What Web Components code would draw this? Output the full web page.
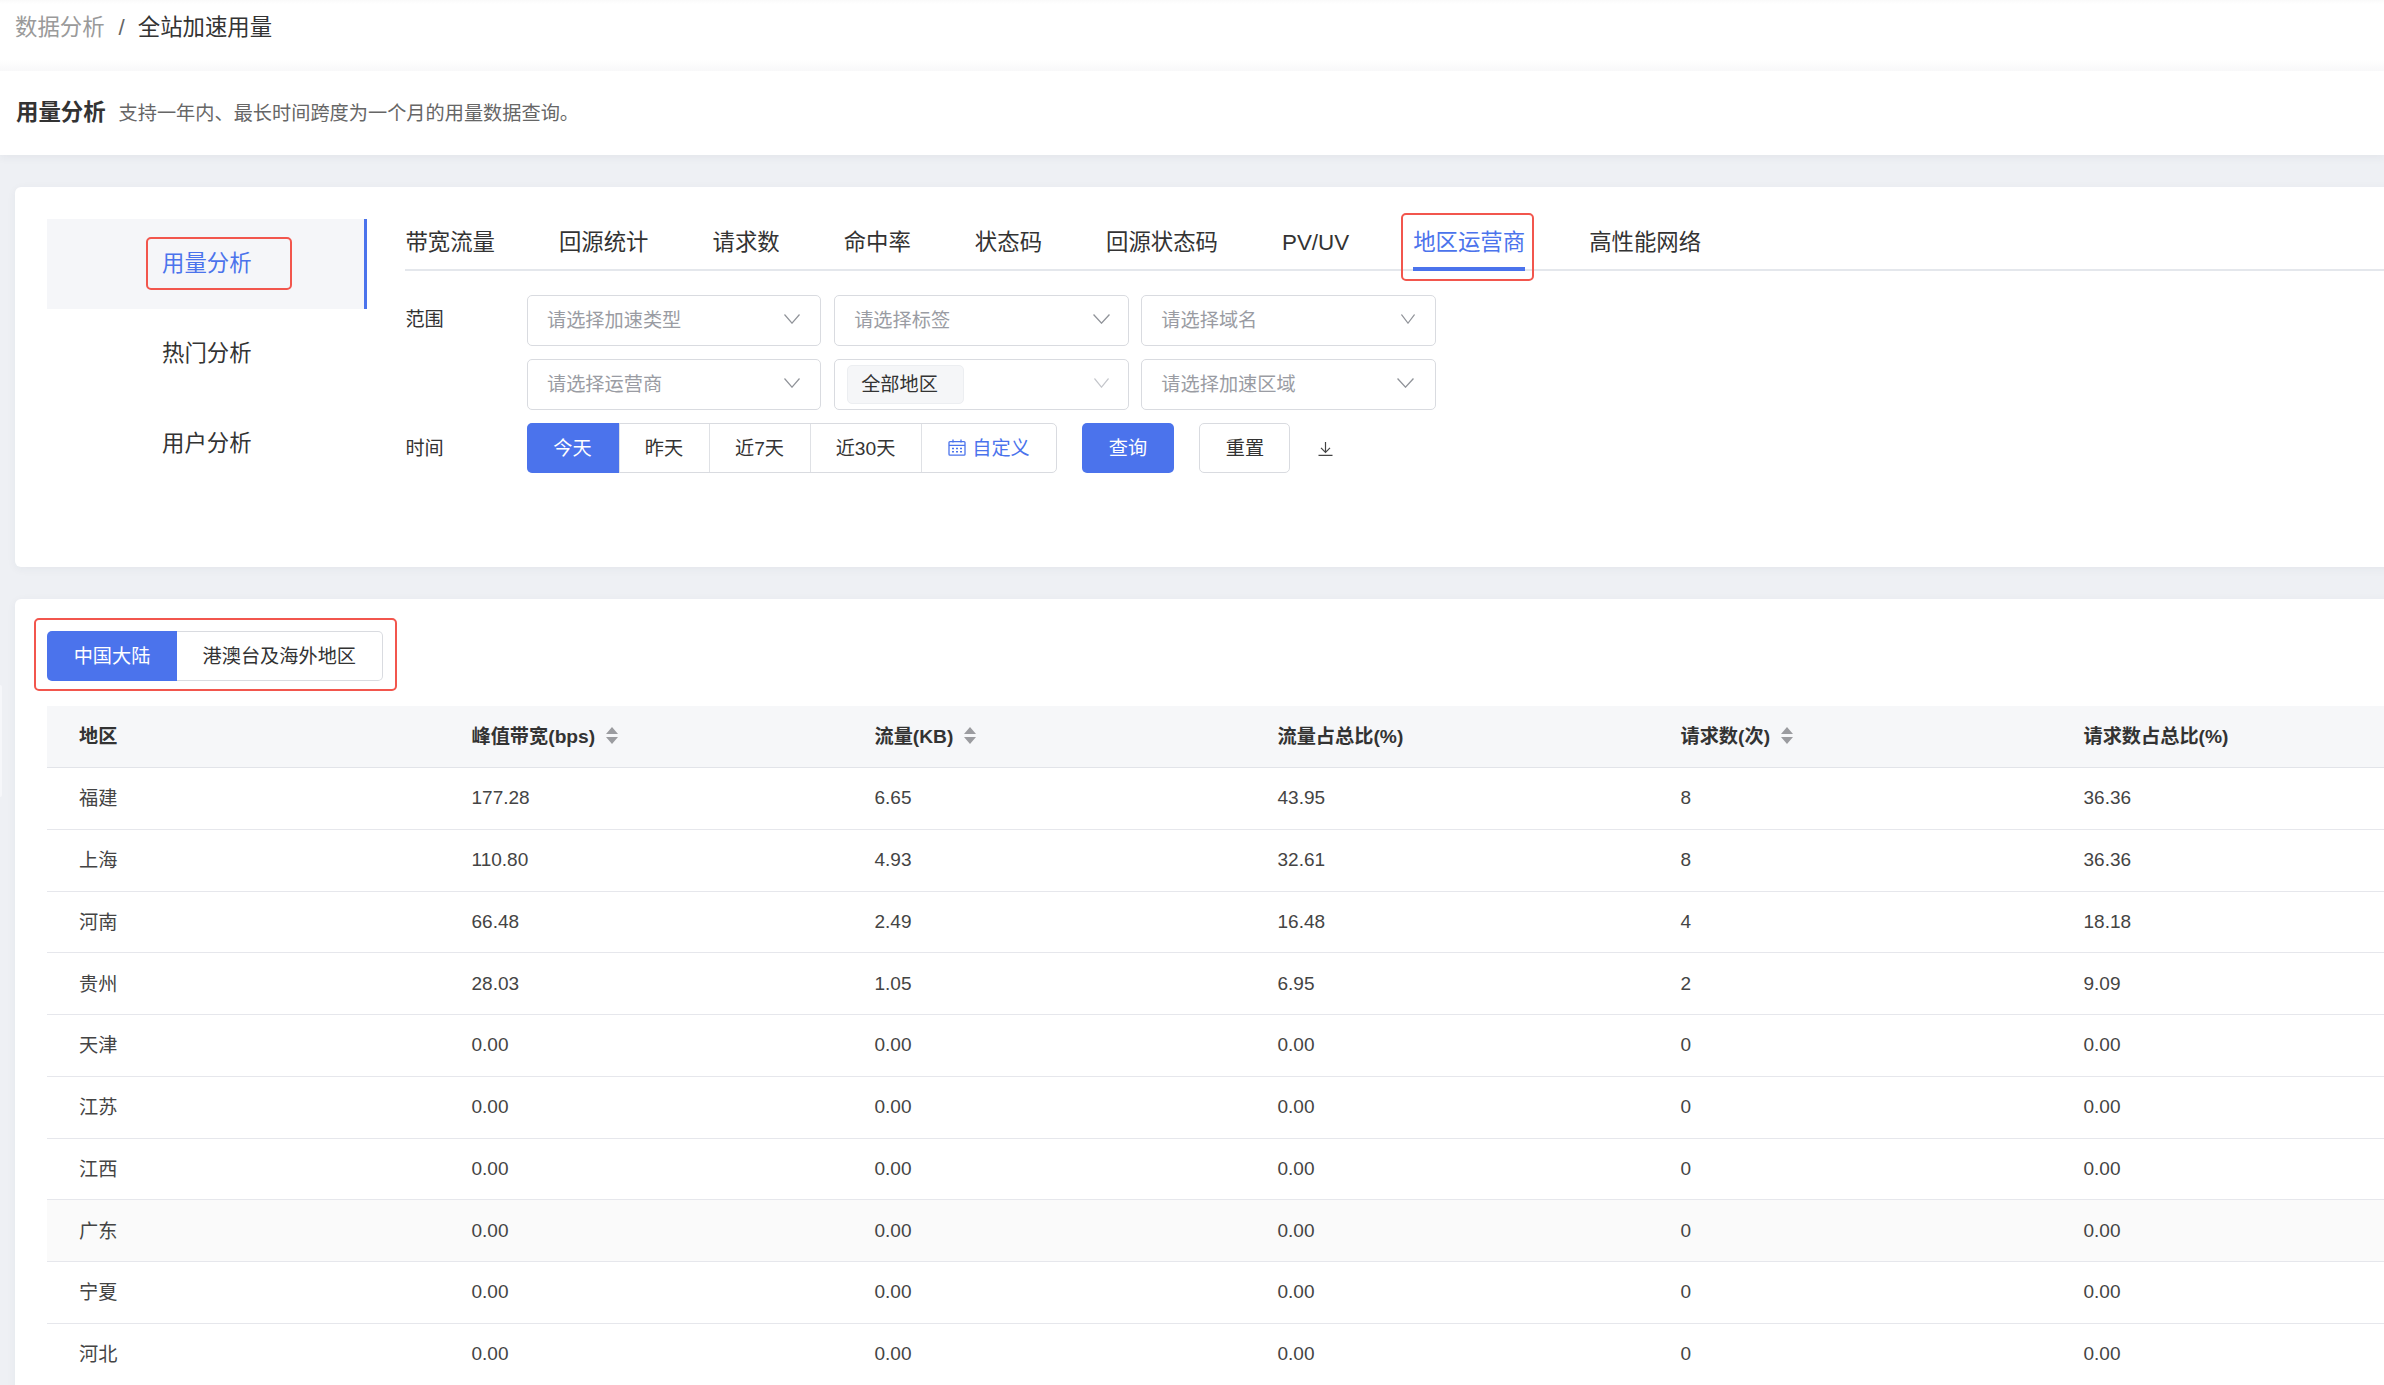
<!DOCTYPE html>
<html lang="zh-CN">
<head>
<meta charset="utf-8">
<title>全站加速用量</title>
<style>
    html, body { margin: 0; padding: 0; height: 100%; overflow: hidden; background: #eef0f4; }
    body { font-family: "Liberation Sans", "Noto Sans CJK SC", sans-serif; color: #333; width: 2384px; height: 1385px; position: relative; }
</style>
</head>
<body>
<page-head></page-head>
<usage-card></usage-card>
<region-card></region-card>
<side-handle></side-handle>

<script>
const BLUE = '#4b73ec';
const RED = '#f2564d';

class PageHead extends HTMLElement {
    constructor() {
        super();
        this.attachShadow({ mode: 'open' });
    }

    connectedCallback() {
        this.shadowRoot.innerHTML = `
            <style>
                :host { display: block; box-shadow: 0 3px 8px rgba(40, 50, 80, .05); position: relative; }
                .crumb {
                    height: 71px; box-sizing: border-box; padding: 13px 15px 0; font-size: 22.4px; line-height: 30px;
                    display: flex; background: linear-gradient(#fafafa 0, #fff 4px, #fff 60px, #f8f8f9 71px);
                }
                .crumb .prev { color: #9a9a9a; }
                .crumb .sep { color: #666; margin: 0 13px 0 14px; }
                .crumb .cur { color: #333; }
                .desc {
                    height: 84px; box-sizing: border-box; padding-top: 27px; padding-left: 16px; background: #fff;
                    display: flex; align-items: baseline; line-height: 30px;
                }
                .desc b { font-size: 22.4px; color: #333; font-weight: 700; margin-right: 13px; }
                .desc span { font-size: 19.2px; color: #666; }
            </style>
            <div class="crumb"><span class="prev">数据分析</span><span class="sep">/</span><span class="cur">全站加速用量</span></div>
            <div class="desc"><b>用量分析</b><span>支持一年内、最长时间跨度为一个月的用量数据查询。</span></div>
        `;
    }
}

class SideMenu extends HTMLElement {
    constructor() {
        super();
        this.attachShadow({ mode: 'open' });
    }

    connectedCallback() {
        const items = ['用量分析', '热门分析', '用户分析'];
        this.shadowRoot.innerHTML = `
            <style>
                :host { display: block; width: 320px; flex: none; font-size: 22.4px; color: #333; }
                .item { height: 90px; display: flex; align-items: center; padding-left: 115px; box-sizing: border-box; }
                .item.on { background: #f5f6f9; border-right: 3px solid ${BLUE}; color: ${BLUE}; }
                .item span { position: relative; line-height: 30px; }
                .item.on span::after {
                    content: ""; position: absolute; left: -16px; right: -40px; top: -12.5px; bottom: -10.5px;
                    border: 2.5px solid ${RED}; border-radius: 5px;
                }
            </style>
            ${items.map((t, i) => `<div class="item ${i === 0 ? 'on' : ''}"><span>${t}</span></div>`).join('')}
        `;
    }
}

class TabBar extends HTMLElement {
    constructor() {
        super();
        this.attachShadow({ mode: 'open' });
    }

    connectedCallback() {
        const tabs = ['带宽流量', '回源统计', '请求数', '命中率', '状态码', '回源状态码', 'PV/UV', '地区运营商', '高性能网络'];
        this.shadowRoot.innerHTML = `
            <style>
                :host { display: flex; gap: 64px; height: 52px; box-sizing: border-box; border-bottom: 2px solid #e4e7ec; font-size: 22.4px; color: #333; }
                .tab { position: relative; height: 52px; box-sizing: border-box; padding-top: 9px; line-height: 30px; white-space: nowrap; }
                .tab.on { color: ${BLUE}; }
                .tab.on::before { content: ""; position: absolute; left: 0; right: 0; bottom: 0; height: 4px; background: ${BLUE}; }
                .tab.on::after {
                    content: ""; position: absolute; left: -12px; right: -9px; top: -6px; bottom: -10px;
                    border: 2.5px solid ${RED}; border-radius: 5px;
                }
            </style>
            ${tabs.map(t => `<div class="tab ${t === '地区运营商' ? 'on' : ''}">${t}</div>`).join('')}
        `;
    }
}

class SelectBox extends HTMLElement {
    constructor() {
        super();
        this.attachShadow({ mode: 'open' });
    }

    connectedCallback() {
        const tag = this.getAttribute('tag');
        const holder = this.getAttribute('placeholder');
        const width = this.getAttribute('chev-w') || 16;
        const right = this.getAttribute('chev-r') || 21;
        this.shadowRoot.innerHTML = `
            <style>
                :host {
                    display: flex; align-items: center; justify-content: space-between; box-sizing: border-box;
                    width: 294.4px; height: 51px; background: #fff; border: 1px solid #d9dbe0; border-radius: 5px;
                    font-size: 19.2px; padding-left: ${tag ? 12 : 19}px; padding-right: ${right - 1}px;
                }
                .holder { color: #9a9ca3; margin-top: -3px; }
                .tag {
                    height: 39px; width: 117px; box-sizing: border-box; padding-left: 13px; line-height: 37px; color: #333;
                    background: #f5f6f8; border: 1px solid #eceef1; border-radius: 5px;
                }
                svg { display: block; flex: none; margin-top: -3px; }
            </style>
            ${tag ? `<span class="tag">${tag}</span>` : `<span class="holder">${holder}</span>`}
            <svg width="${width}" height="10" viewBox="0 0 16 10" preserveAspectRatio="none" fill="none">
                <polyline points="0.5,0.5 8,9.2 15.5,0.5" stroke="${tag ? '#c4c6cb' : '#909399'}" stroke-width="1.2"/>
            </svg>
        `;
    }
}

class BtnGroup extends HTMLElement {
    constructor() {
        super();
        this.attachShadow({ mode: 'open' });
    }

    connectedCallback() {
        const widths = (this.getAttribute('widths') || '').split(',');
        const labels = (this.getAttribute('labels') || '').split(',');
        const iconLast = this.hasAttribute('calendar');
        const cal = `<svg width="18" height="17" viewBox="0 0 18 17" fill="none" stroke="${BLUE}" stroke-width="1.3">
                <rect x="1" y="2.6" width="16" height="13.6" rx="1"/><path d="M1 6.4h16M5 .4v3M13 .4v3"/>
                <path d="M4 9.4h2M8 9.4h2M12 9.4h2M4 12.8h2M8 12.8h2M12 12.8h2" stroke-width="1.5"/></svg>`;
        this.shadowRoot.innerHTML = `
            <style>
                :host { display: inline-flex; height: 50px; font-size: 19.2px; color: #333; background: #fff; box-sizing: border-box; border: 1px solid #d9dbe0; border-radius: 5px; }
                .b { display: flex; align-items: center; justify-content: center; gap: 6px; box-sizing: border-box; border-left: 1px solid #dfe1e5; white-space: nowrap; padding: 0 1px 2px 0; }
                .b:first-of-type {
                    background: ${BLUE}; color: #fff; border: 0; margin: -1px 0 -1px -1px; border-radius: 5px 0 0 5px;
                }
                .b.cal { color: ${BLUE}; padding-right: 0; }
            </style>
            ${labels.map((t, i) => {
                const last = iconLast && i === labels.length - 1;
                return `<div class="b ${last ? 'cal' : ''}" style="width:${widths[i]}px">${last ? cal : ''}${t}</div>`;
            }).join('')}
        `;
    }
}

class FilterForm extends HTMLElement {
    constructor() {
        super();
        this.attachShadow({ mode: 'open' });
    }

    connectedCallback() {
        this.shadowRoot.innerHTML = `
            <style>
                :host { display: grid; grid-template-columns: 121.6px 1fr; row-gap: 13px; margin-top: 24px; font-size: 19.2px; color: #333; }
                .label { line-height: 50px; }
                .label.t { height: 50px; line-height: 52px; }
                .selects { display: grid; grid-template-columns: repeat(3, 294.4px); gap: 13px 12.8px; }
                .time { display: flex; align-items: flex-start; }
                .primary, .plain {
                    width: 92px; height: 50px; margin-left: 25px; box-sizing: border-box; border-radius: 5px;
                    display: flex; align-items: center; justify-content: center; padding-bottom: 2px;
                }
                .primary { background: ${BLUE}; color: #fff; }
                .plain { width: 91px; margin-left: 25.5px; border: 1px solid #d9dbe0; color: #333; }
                .dl { display: block; margin-left: 28px; margin-top: 19px; }
            </style>
            <div class="label">范围</div>
            <div class="selects">
                <select-box placeholder="请选择加速类型"></select-box>
                <select-box placeholder="请选择标签" chev-w="17" chev-r="19"></select-box>
                <select-box placeholder="请选择域名" chev-w="14" chev-r="21"></select-box>
                <select-box placeholder="请选择运营商"></select-box>
                <select-box tag="全部地区" chev-w="15" chev-r="20"></select-box>
                <select-box placeholder="请选择加速区域" chev-w="17" chev-r="22"></select-box>
            </div>
            <div class="label t">时间</div>
            <div class="time">
                <btn-group labels="今天,昨天,近7天,近30天,自定义" widths="92,90,101,111,135" calendar></btn-group>
                <div class="primary">查询</div>
                <div class="plain">重置</div>
                <svg class="dl" width="15" height="14" viewBox="0 0 15 14" fill="none" stroke="#444" stroke-width="1.2">
                    <path d="M7.5 0v10M3 5.8l4.5 4.5 4.5-4.5M0.5 13.3h14"/>
                </svg>
            </div>
        `;
    }
}

class UsageCard extends HTMLElement {
    constructor() {
        super();
        this.attachShadow({ mode: 'open' });
    }

    connectedCallback() {
        this.shadowRoot.innerHTML = `
            <style>
                :host {
                    display: flex; gap: 38.4px; box-sizing: border-box; height: 380px; width: 2400px;
                    margin: 32px 0 0 15px; padding: 32px 0 0 32px; background: #fff; border-radius: 6px;
                    box-shadow: 0 2px 10px rgba(40, 50, 80, .05); position: relative;
                }
                .main { flex: 1; min-width: 0; }
            </style>
            <side-menu></side-menu>
            <div class="main">
                <tab-bar></tab-bar>
                <filter-form></filter-form>
            </div>
        `;
    }
}

class RegionTable extends HTMLElement {
    constructor() {
        super();
        this.attachShadow({ mode: 'open' });
    }

    connectedCallback() {
        const caret = `<svg class="caret" width="12" height="17" viewBox="0 0 12 17" fill="#9b9ca0"><path d="M6 0l6 7H0zM6 17L0 10h12z"/></svg>`;
        const heads = [
            ['地区', false], ['峰值带宽(bps)', true], ['流量(KB)', true],
            ['流量占总比(%)', false], ['请求数(次)', true], ['请求数占总比(%)', false]
        ];
        const rows = [
            ['福建', '177.28', '6.65', '43.95', '8', '36.36'],
            ['上海', '110.80', '4.93', '32.61', '8', '36.36'],
            ['河南', '66.48', '2.49', '16.48', '4', '18.18'],
            ['贵州', '28.03', '1.05', '6.95', '2', '9.09'],
            ['天津', '0.00', '0.00', '0.00', '0', '0.00'],
            ['江苏', '0.00', '0.00', '0.00', '0', '0.00'],
            ['江西', '0.00', '0.00', '0.00', '0', '0.00'],
            ['广东', '0.00', '0.00', '0.00', '0', '0.00'],
            ['宁夏', '0.00', '0.00', '0.00', '0', '0.00'],
            ['河北', '0.00', '0.00', '0.00', '0', '0.00']
        ];
        this.shadowRoot.innerHTML = `
            <style>
                :host { display: block; margin-top: 25px; font-size: 19px; color: #444; }
                .row {
                    display: grid; grid-template-columns: 392.5px repeat(5, 403px); height: 61.75px; align-items: center;
                    box-sizing: border-box; border-bottom: 1px solid #e6e7ec;
                }
                .row.head { height: 62px; background: #f6f7f9; font-size: 19.2px; font-weight: 700; color: #333; border-bottom-color: #e2e4e9; }
                .row.head .cell { padding-bottom: 3px; }
                .row.head .caret { margin-top: 1px; }
                .row.hover { background: #fafafa; }
                .cell { padding-left: 32px; display: flex; align-items: center; }
                .cell.name { padding-bottom: 2px; font-size: 19.2px; }
                .caret { margin-left: 11px; }
            </style>
            <div class="row head">
                ${heads.map(h => `<div class="cell">${h[0]}${h[1] ? caret : ''}</div>`).join('')}
            </div>
            ${rows.map(r => `<div class="row ${r[0] === '广东' ? 'hover' : ''}">${r.map((c, i) => `<div class="cell ${i === 0 ? 'name' : ''}">${c}</div>`).join('')}</div>`).join('')}
        `;
    }
}

class SegToggle extends HTMLElement {
    constructor() {
        super();
        this.attachShadow({ mode: 'open' });
    }

    connectedCallback() {
        this.shadowRoot.innerHTML = `
            <style>
                :host { display: inline-flex; position: relative; height: 50px; box-sizing: border-box; vertical-align: top; font-size: 19.2px; color: #333; }
                :host::after {
                    content: ""; position: absolute; left: -13.5px; right: -14.5px; top: -13.5px; bottom: -9.5px;
                    border: 2.5px solid ${RED}; border-radius: 5px;
                }
                .a, .b { display: flex; align-items: center; justify-content: center; box-sizing: border-box; height: 50px; padding-bottom: 2px; }
                .a { width: 130px; background: ${BLUE}; color: #fff; border-radius: 5px 0 0 5px; }
                .b { width: 205.6px; background: #fff; border: 1px solid #d9dbe0; border-left: 0; border-radius: 0 5px 5px 0; }
            </style>
            <div class="a">中国大陆</div>
            <div class="b">港澳台及海外地区</div>
        `;
    }
}

class RegionCard extends HTMLElement {
    constructor() {
        super();
        this.attachShadow({ mode: 'open' });
    }

    connectedCallback() {
        this.shadowRoot.innerHTML = `
            <style>
                :host {
                    display: block; box-sizing: border-box; width: 2400px; height: 800px;
                    margin: 32px 0 0 15px; padding: 32px 0 0 32px; background: #fff; border-radius: 6px;
                    box-shadow: 0 2px 10px rgba(40, 50, 80, .05); position: relative;
                }
            </style>
            <seg-toggle></seg-toggle>
            <region-table></region-table>
        `;
    }
}

class SideHandle extends HTMLElement {
    constructor() {
        super();
        this.attachShadow({ mode: 'open' });
    }

    connectedCallback() {
        this.shadowRoot.innerHTML = `
            <style>
                :host { display: block; position: absolute; left: 0; top: 685px; width: 2px; height: 112px; background: #f6f7fa; border-radius: 0 3px 3px 0; }
            </style>
        `;
    }
}

customElements.define('page-head', PageHead);
customElements.define('side-menu', SideMenu);
customElements.define('tab-bar', TabBar);
customElements.define('select-box', SelectBox);
customElements.define('btn-group', BtnGroup);
customElements.define('filter-form', FilterForm);
customElements.define('usage-card', UsageCard);
customElements.define('region-table', RegionTable);
customElements.define('seg-toggle', SegToggle);
customElements.define('region-card', RegionCard);
customElements.define('side-handle', SideHandle);
</script>
</body>
</html>
